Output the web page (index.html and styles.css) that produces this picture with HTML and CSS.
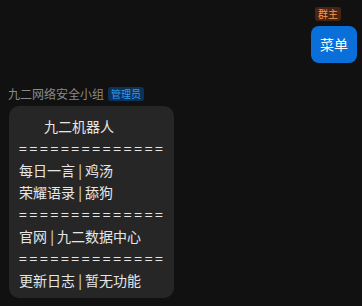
FILE: index.html
```html
<!DOCTYPE html>
<html>
<head>
<meta charset="utf-8">
<link rel="stylesheet" href="styles.css">
</head>
<body>
<div class="chat">
  <div class="msg-right">
    <span class="badge owner">群主</span>
    <div class="bubble-blue">菜单</div>
  </div>
  <div class="msg-left">
    <div class="sender"><span class="name">九二网络安全小组</span><span class="badge admin">管理员</span></div>
    <div class="bubble-gray">
      <div class="line title">九二机器人</div>
      <div class="line sep">==============</div>
      <div class="line">每日一言 | 鸡汤</div>
      <div class="line">荣耀语录 | 舔狗</div>
      <div class="line sep">==============</div>
      <div class="line">官网 | 九二数据中心</div>
      <div class="line sep">==============</div>
      <div class="line">更新日志 | 暂无功能</div>
    </div>
  </div>
</div>
</body>
</html>
```
FILE: styles.css
```css
html, body {
  margin: 0;
  padding: 0;
  background: #111111;
  font-family: "Noto Sans CJK SC", "Noto Sans", sans-serif;
  color: #e6e6e6;
}
.chat {
  width: 362px;
  height: 306px;
  display: flex;
  flex-direction: column;
  box-sizing: border-box;
  padding-top: 7px;
}
.msg-right {
  display: flex;
  flex-direction: column;
  align-items: flex-end;
  padding-right: 5px;
  gap: 5px;
}
.badge {
  font-size: 10px;
  line-height: 14px;
  padding: 0 3px;
  border-radius: 3px;
}
.owner {
  background: #4a2412;
  color: #f29b4f;
  margin-right: 16px;
}
.admin {
  background: #0c3258;
  color: #2f9cf0;
  margin-left: 4px;
}
.bubble-blue {
  background: #0a6fd8;
  color: #ffffff;
  font-size: 14px;
  line-height: 19px;
  padding: 9px 9px;
  border-radius: 8px;
}
.msg-left {
  margin-top: 23px;
  padding-left: 8px;
  display: flex;
  flex-direction: column;
  align-items: flex-start;
  gap: 4px;
}
.sender {
  display: flex;
  align-items: center;
}
.name {
  font-size: 12px;
  color: #8a8a8a;
  line-height: 16px;
}
.bubble-gray {
  margin-left: 1px;
  background: #262626;
  border-radius: 10px;
  padding: 9px 10px 7px 10px;
  width: 165px;
  box-sizing: border-box;
}
.line {
  font-size: 14px;
  line-height: 22px;
  height: 22px;
  white-space: nowrap;
}
.title {
  padding-left: 25px;
}
.sep {
  letter-spacing: 2.7px;
}
```
